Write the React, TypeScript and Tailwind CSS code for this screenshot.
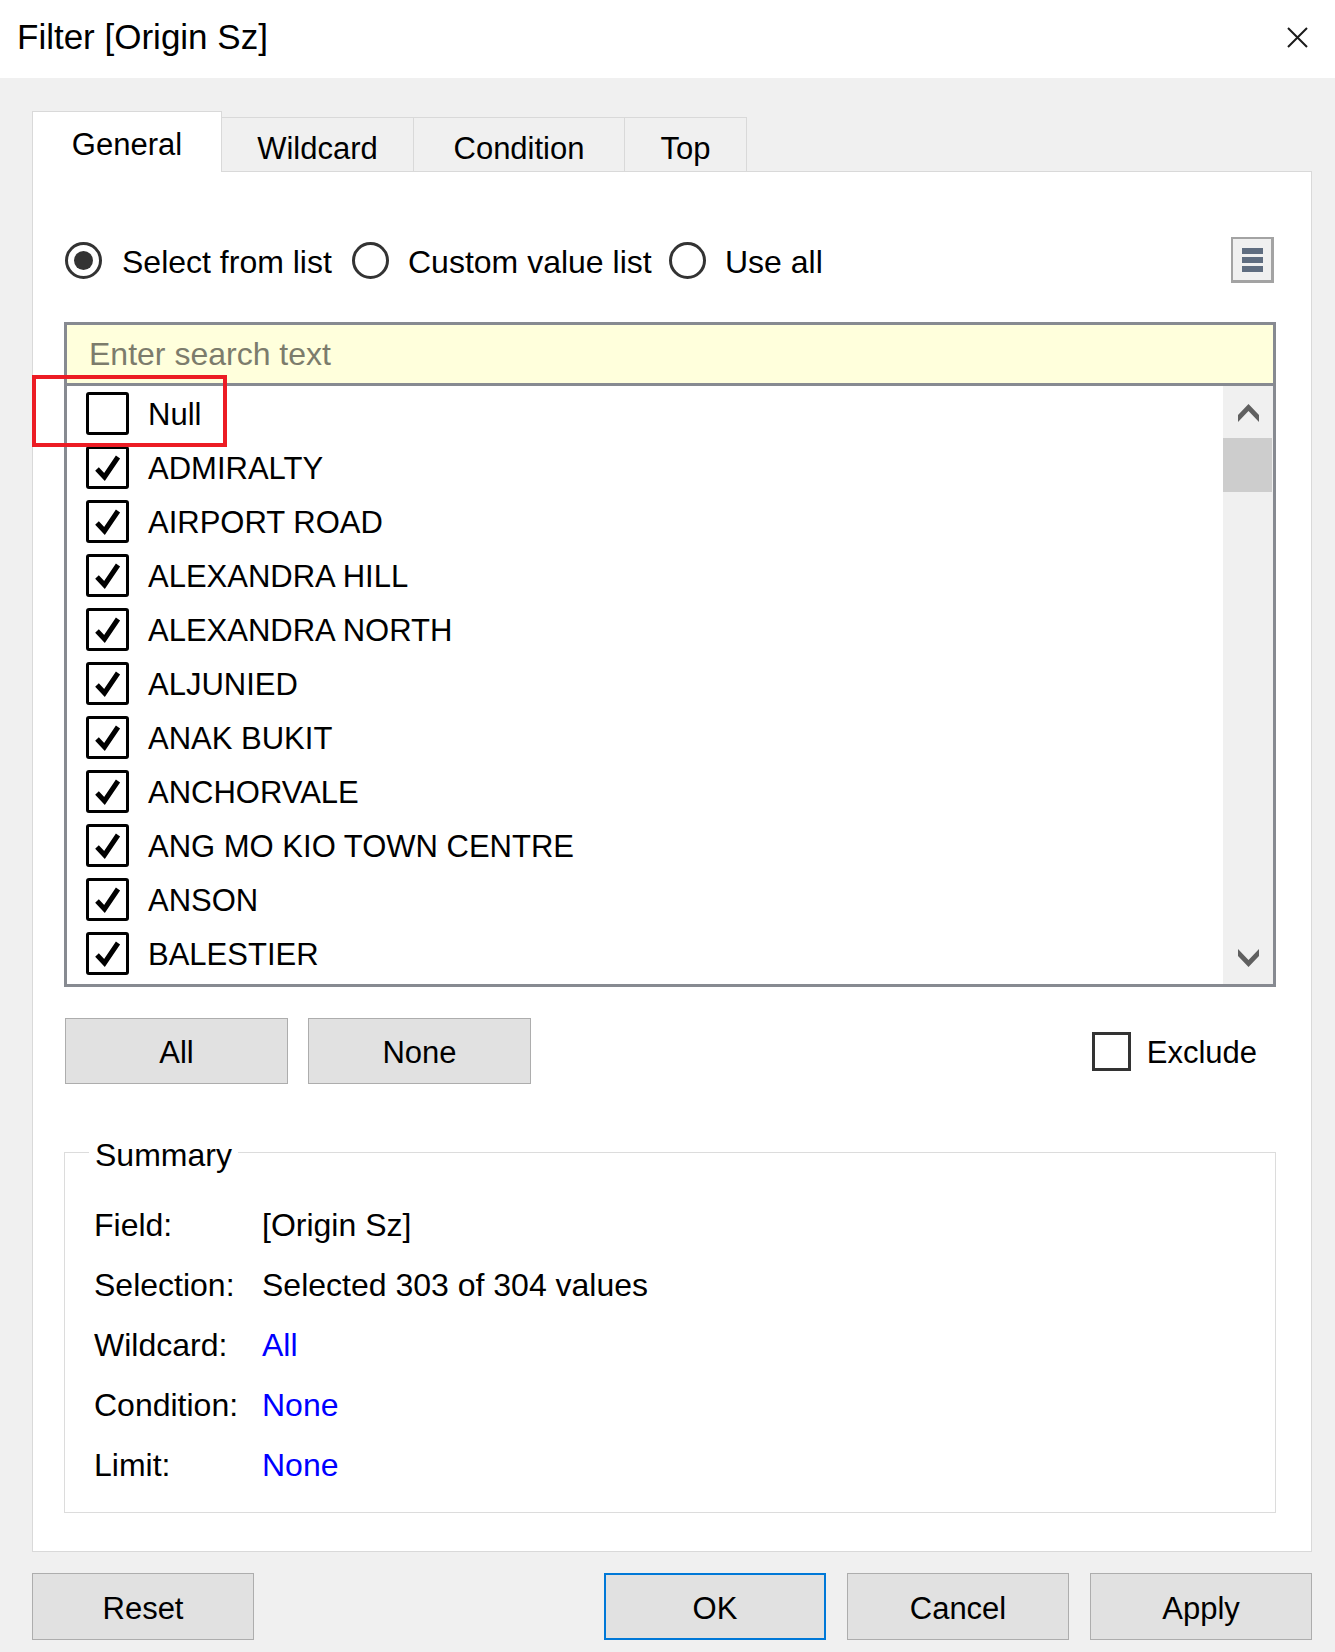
import React from "react";

const items = [
  "ADMIRALTY",
  "AIRPORT ROAD",
  "ALEXANDRA HILL",
  "ALEXANDRA NORTH",
  "ALJUNIED",
  "ANAK BUKIT",
  "ANCHORVALE",
  "ANG MO KIO TOWN CENTRE",
  "ANSON",
  "BALESTIER",
];

function Check({ checked }: { checked: boolean }) {
  return (
    <div className="w-[43px] h-[43px] border-[3px] border-black rounded-[3px] bg-white flex items-center justify-center shrink-0">
      {checked && (
        <svg width="37" height="37" viewBox="0 0 37 37">
          <path d="M8 20 L15.5 28 L29 8" fill="none" stroke="#000" strokeWidth="5" strokeLinejoin="miter" />
        </svg>
      )}
    </div>
  );
}

function Radio({ on }: { on: boolean }) {
  return (
    <div className="w-[37px] h-[37px] rounded-full border-[3px] border-[#333] flex items-center justify-center shrink-0">
      {on && <div className="w-[19px] h-[19px] rounded-full bg-[#333]" />}
    </div>
  );
}

function Btn({ label, primary, w }: { label: string; primary?: boolean; w: string }) {
  return (
    <div
      className={
        "h-full flex items-center justify-center bg-[#e1e1e1] text-[31px] text-black pt-[5px] " +
        w +
        (primary ? " border-2 border-[#0078d7]" : " border border-[#adadad]")
      }
    >
      {label}
    </div>
  );
}

export default function App() {
  return (
    <div className="relative w-[1335px] h-[1652px] bg-[#f0f0f0] flex flex-col font-['Liberation_Sans',Arial,sans-serif] text-black overflow-hidden">
      {/* Title bar */}
      <div className="h-[78px] bg-white flex items-center justify-between pl-[17px] pr-[27px] shrink-0">
        <div className="text-[35px] leading-none pb-[6px]">Filter [Origin Sz]</div>
        <svg width="21" height="21" viewBox="0 0 21 21" className="mb-[4px]">
          <path d="M1 1 L20 20 M20 1 L1 20" stroke="#1a1a1a" strokeWidth="2" />
        </svg>
      </div>

      {/* Body */}
      <div className="flex flex-col pl-[32px] pr-[23px] pt-[33px]">
        {/* Tabs */}
        <div className="flex h-[61px] -mb-px">
          <div className="relative z-10 w-[190px] h-[61px] bg-white border border-b-0 border-[#d9d9d9] flex items-center justify-center text-[31px] pt-[6px]">
            General
          </div>
          <div className="mt-[6px] w-[192px] h-[54px] bg-[#f0f0f0] border-t border-r border-[#d9d9d9] flex items-center justify-center text-[31px] pt-[10px]">
            Wildcard
          </div>
          <div className="mt-[6px] w-[211px] h-[54px] bg-[#f0f0f0] border-t border-r border-[#d9d9d9] flex items-center justify-center text-[31px] pt-[10px]">
            Condition
          </div>
          <div className="mt-[6px] w-[122px] h-[54px] bg-[#f0f0f0] border-t border-r border-[#d9d9d9] flex items-center justify-center text-[31px] pt-[10px]">
            Top
          </div>
        </div>

        {/* Panel */}
        <div className="h-[1381px] bg-white border border-[#d9d9d9] flex flex-col pl-[31px] pr-[35px]">
          {/* Radio row */}
          <div className="mt-[65px] h-[46px] flex items-center">
            <div className="ml-[1px]">
              <Radio on />
            </div>
            <div className="ml-[20px] w-[230px] text-[32px] leading-none pt-[3px]">Select from list</div>
            <Radio on={false} />
            <div className="ml-[19px] w-[261px] text-[32px] leading-none pt-[3px]">Custom value list</div>
            <Radio on={false} />
            <div className="ml-[19px] text-[32px] leading-none pt-[3px]">Use all</div>
            <div className="ml-auto mr-[2px] w-[43px] h-[46px] bg-[#f0f0f0] border-2 border-[#a3a3a3] border-r-[3px] border-b-[3px] flex flex-col items-center justify-center gap-[3px]">
              <div className="w-[21px] h-[6px] bg-[#5f6d80]" />
              <div className="w-[21px] h-[6px] bg-[#5f6d80]" />
              <div className="w-[21px] h-[6px] bg-[#5f6d80]" />
            </div>
          </div>

          {/* List box */}
          <div className="mt-[39px] h-[665px] border-[3px] border-[#878a91] flex flex-col">
            <div className="h-[61px] bg-[#ffffdc] border-b-[3px] border-[#878a91] flex items-center pl-[22px] text-[32px] text-[#7c7c6c] shrink-0">
              Enter search text
            </div>
            <div className="flex-1 flex min-h-0">
              <div className="flex-1 flex flex-col">
                <div className="h-[54px] flex items-center pl-[19px]">
                  <Check checked={false} />
                  <span className="ml-[19px] text-[31px] leading-none pt-[2px]">Null</span>
                </div>
                {items.map((it) => (
                  <div key={it} className="h-[54px] flex items-center pl-[19px]">
                    <Check checked />
                    <span className="ml-[19px] text-[31px] leading-none pt-[2px]">{it}</span>
                  </div>
                ))}
              </div>
              <div className="w-[50px] bg-[#f0f0f0] flex flex-col">
                <div className="h-[52px] flex items-center justify-center">
                  <svg width="21" height="19" viewBox="0 0 21 19">
                    <polygon points="0,12 10.5,1 21,12 21,19 10.5,8 0,19" fill="#606060" />
                  </svg>
                </div>
                <div className="h-[54px] bg-[#cdcdcd] mr-[1px]" />
                <div className="flex-1" />
                <div className="h-[52px] flex items-center justify-center">
                  <svg width="21" height="19" viewBox="0 0 21 19">
                    <polygon points="0,0 10.5,11 21,0 21,7 10.5,18 0,7" fill="#606060" />
                  </svg>
                </div>
              </div>
            </div>
          </div>

          {/* All / None / Exclude */}
          <div className="mt-[31px] h-[66px] flex items-center">
            <div className="ml-[1px] h-full">
              <Btn label="All" w="w-[223px]" />
            </div>
            <div className="ml-[20px] h-full">
              <Btn label="None" w="w-[223px]" />
            </div>
            <div className="ml-auto mr-[19px] flex items-center">
              <div className="w-[39px] h-[39px] border-[3px] border-[#333] bg-white" />
              <span className="ml-[16px] text-[31px] leading-none pt-[2px]">Exclude</span>
            </div>
          </div>

          {/* Summary */}
          <div className="relative mt-[68px] h-[361px] border border-[#dcdcdc] flex flex-col pt-[41px] pl-[29px]">
            <div className="absolute left-[24px] top-[-17px] bg-white px-[6px] text-[32px] leading-none pt-[3px]">
              Summary
            </div>
            {[
              ["Field:", "[Origin Sz]", false],
              ["Selection:", "Selected 303 of 304 values", false],
              ["Wildcard:", "All", true],
              ["Condition:", "None", true],
              ["Limit:", "None", true],
            ].map(([k, v, blue]) => (
              <div key={k as string} className="h-[60px] flex items-center text-[32px] leading-none pt-[2px]">
                <div className="w-[168px]">{k}</div>
                <div className={blue ? "text-[#0000ff]" : ""}>{v}</div>
              </div>
            ))}
          </div>
        </div>

        {/* Bottom buttons */}
        <div className="mt-[21px] h-[67px] flex">
          <Btn label="Reset" w="w-[222px]" />
          <div className="ml-auto flex gap-[21px] h-full">
            <Btn label="OK" primary w="w-[222px]" />
            <Btn label="Cancel" w="w-[222px]" />
            <Btn label="Apply" w="w-[222px]" />
          </div>
        </div>
      </div>

      {/* Red annotation */}
      <div className="absolute left-[32px] top-[375px] w-[195px] h-[72px] border-[4px] border-[#ec1c24]" />
    </div>
  );
}
